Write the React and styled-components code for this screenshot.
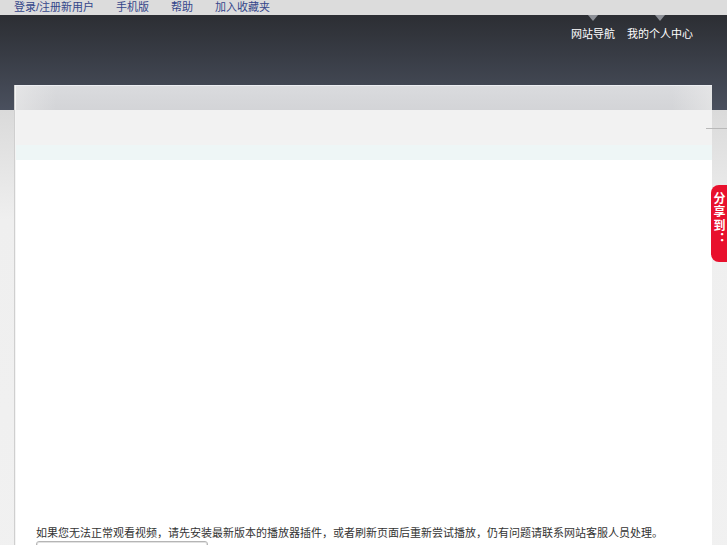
import React from 'react';
import styled, { createGlobalStyle } from 'styled-components';

const GlobalStyle = createGlobalStyle`
  html, body {
    margin: 0;
    padding: 0;
  }
  body {
    background: #e4e4e4;
    font-family: "Liberation Sans", "Noto Sans CJK SC", sans-serif;
    font-size: 11px;
    overflow: hidden;
  }
`;

const Page = styled.div`
  position: relative;
  min-height: 545px;
  background: linear-gradient(#dadada 0, #dadada 110px, #efefef 220px, #f1f1f1 100%);
`;

const TopBar = styled.div`
  display: flex;
  align-items: center;
  gap: 22px;
  height: 15px;
  padding: 0 14px;
  background: #dcdcdc;
`;

const TopLink = styled.a`
  color: #34468a;
  font-size: 11px;
  line-height: 15px;
  text-decoration: none;
`;

const Header = styled.div`
  display: flex;
  justify-content: flex-end;
  align-items: flex-start;
  height: 95px;
  padding-right: 34px;
  background: linear-gradient(#2c2e33 0, #383c45 40px, #4a505e 95px);
`;

const HeaderNav = styled.div`
  display: flex;
  gap: 12px;
`;

const HeaderItem = styled.a`
  display: flex;
  flex-direction: column;
  align-items: center;
  color: #ffffff;
  font-size: 11px;
  text-decoration: none;

  &::before {
    content: '';
    width: 0;
    height: 0;
    border-left: 5px solid transparent;
    border-right: 5px solid transparent;
    border-top: 6px solid #8d9097;
    margin-bottom: 4px;
  }
`;

const Main = styled.div`
  display: flex;
  margin: -25px 15px 0 15px;
`;

const Box = styled.div`
  flex: 1;
  display: flex;
  flex-direction: column;
  border-left: 1px solid #f4f4f4;
  box-shadow: -1px 0 0 #cfcfcf;
`;

const TitleBar = styled.div`
  height: 24px;
  border-top: 1px solid #eceef2;
  background:
    linear-gradient(90deg, rgba(235, 235, 235, 0.6) 0, rgba(214, 215, 218, 0) 40px,
      rgba(214, 215, 218, 0) calc(100% - 40px), rgba(235, 235, 235, 0.6) 100%),
    linear-gradient(#dadbde, #d3d4d7);
`;

const Toolbar = styled.div`
  height: 35px;
  background: #f2f2f2;
`;

const Strip = styled.div`
  height: 15px;
  background: #eef6f6;
`;

const Content = styled.div`
  background: #ffffff;
  padding: 20px 20px 40px;
`;

const Player = styled.div`
  height: 347px;
`;

const Notice = styled.p`
  margin: 0;
  color: #333333;
  font-size: 11px;
  line-height: 13px;
  white-space: nowrap;
`;

const Field = styled.input`
  display: block;
  box-sizing: border-box;
  width: 172px;
  height: 22px;
  margin-top: 1px;
  border: 1px solid #b5b5b5;
  border-radius: 3px;
  box-shadow: inset 0 0 0 1px #e2e2e2;
  background: #ffffff;
`;

const SideLine = styled.div`
  position: absolute;
  top: 128px;
  right: 0;
  width: 21px;
  height: 1px;
  background: #b9b9b9;
`;

const ShareTab = styled.div`
  position: absolute;
  top: 185px;
  right: 0;
  width: 16px;
  height: 77px;
  box-sizing: border-box;
  padding: 7px 2px 0 0;
  background: #e8102d;
  border-radius: 8px 0 0 8px;
  color: #ffffff;
  font-family: "Noto Sans CJK SC", sans-serif;
  font-size: 12px;
  font-weight: bold;
  line-height: 12px;
  letter-spacing: 1.5px;
  writing-mode: vertical-rl;
`;

export default function App() {
  return (
    <Page>
      <GlobalStyle />
      <TopBar>
        <TopLink href="#">登录/注册新用户</TopLink>
        <TopLink href="#">手机版</TopLink>
        <TopLink href="#">帮助</TopLink>
        <TopLink href="#">加入收藏夹</TopLink>
      </TopBar>
      <Header>
        <HeaderNav>
          <HeaderItem href="#">网站导航</HeaderItem>
          <HeaderItem href="#">我的个人中心</HeaderItem>
        </HeaderNav>
      </Header>
      <Main>
        <Box>
          <TitleBar />
          <Toolbar />
          <Strip />
          <Content>
            <Player />
            <Notice>
              如果您无法正常观看视频，请先安装最新版本的播放器插件，或者刷新页面后重新尝试播放，仍有问题请联系网站客服人员处理。
            </Notice>
            <Field type="text" />
          </Content>
        </Box>
      </Main>
      <SideLine />
      <ShareTab>分享到：</ShareTab>
    </Page>
  );
}
